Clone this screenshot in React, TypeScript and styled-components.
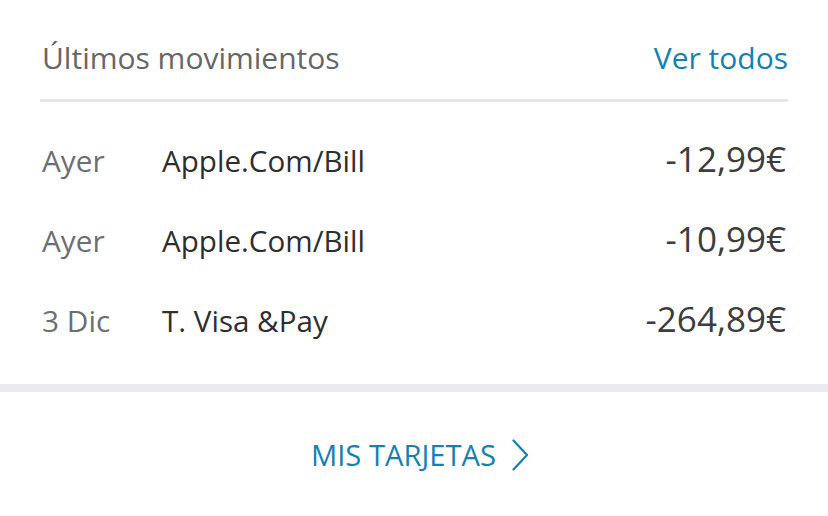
import styled, { createGlobalStyle } from "styled-components";

interface Movement {
  id: number;
  date: string;
  concept: string;
  amount: string;
}

const movements: Movement[] = [
  { id: 1, date: "Ayer", concept: "Apple.Com/Bill", amount: "-12,99€" },
  { id: 2, date: "Ayer", concept: "Apple.Com/Bill", amount: "-10,99€" },
  { id: 3, date: "3 Dic", concept: "T. Visa &Pay", amount: "-264,89€" },
];

const GlobalStyle = createGlobalStyle`
  html, body {
    margin: 0;
    padding: 0;
    background: #ffffff;
    font-family: "Open Sans", "Noto Sans", sans-serif;
  }
`;

const Wrapper = styled.div`
  width: 828px;
  height: 516px;
  background: #ffffff;
  display: flex;
  flex-direction: column;
  overflow: hidden;
`;

const Card = styled.section`
  padding: 0 40px;
`;

const Header = styled.div`
  display: flex;
  justify-content: space-between;
  align-items: baseline;
  padding: 38px 0 21px;
  border-bottom: 3px solid #e6e6e6;
`;

const Title = styled.h2`
  margin: 0 0 0 2px;
  font-size: 30px;
  line-height: 40px;
  font-weight: 400;
  color: #666666;
`;

const Link = styled.a`
  font-size: 30px;
  line-height: 40px;
  color: #1581b1;
  text-decoration: none;
  cursor: pointer;
`;

const List = styled.div`
  display: flex;
  flex-direction: column;
  padding: 17px 0 25px;
`;

const Row = styled.div`
  display: flex;
  align-items: baseline;
  height: 80px;
  line-height: 80px;
`;

const DateCell = styled.span`
  width: 120px;
  padding-left: 2px;
  flex-shrink: 0;
  font-size: 29.8px;
  color: #6e6e6e;
`;

const Concept = styled.span`
  flex: 1;
  font-size: 29.6px;
  color: #2e2e2e;
`;

const Amount = styled.span`
  padding-right: 2px;
  font-size: 35px;
  color: #3d3d3d;
`;

const Band = styled.div`
  height: 8px;
  background: #ebebef;
`;

const Footer = styled.div`
  display: flex;
  justify-content: center;
  align-items: center;
  padding: 43px 0 0 12px;
`;

const FooterLink = styled.a`
  display: flex;
  align-items: center;
  gap: 16px;
  font-size: 29.2px;
  line-height: 40px;
  color: #1581b1;
  cursor: pointer;
`;

const Chevron = () => (
  <svg width="17" height="32" viewBox="0 0 17 32" fill="none">
    <path d="M1.5 1.5 L15 16 L1.5 30.5" stroke="#1581b1" strokeWidth="2.2" strokeLinecap="round" strokeLinejoin="round" />
  </svg>
);

const App = () => {
  return (
    <Wrapper>
      <GlobalStyle />
      <Card>
        <Header>
          <Title>Últimos movimientos</Title>
          <Link>Ver todos</Link>
        </Header>
        <List>
          {movements.map((movement: Movement) => (
            <Row key={movement.id}>
              <DateCell>{movement.date}</DateCell>
              <Concept>{movement.concept}</Concept>
              <Amount>{movement.amount}</Amount>
            </Row>
          ))}
        </List>
      </Card>
      <Band />
      <Footer>
        <FooterLink>
          MIS TARJETAS
          <Chevron />
        </FooterLink>
      </Footer>
    </Wrapper>
  );
};

export default App;
